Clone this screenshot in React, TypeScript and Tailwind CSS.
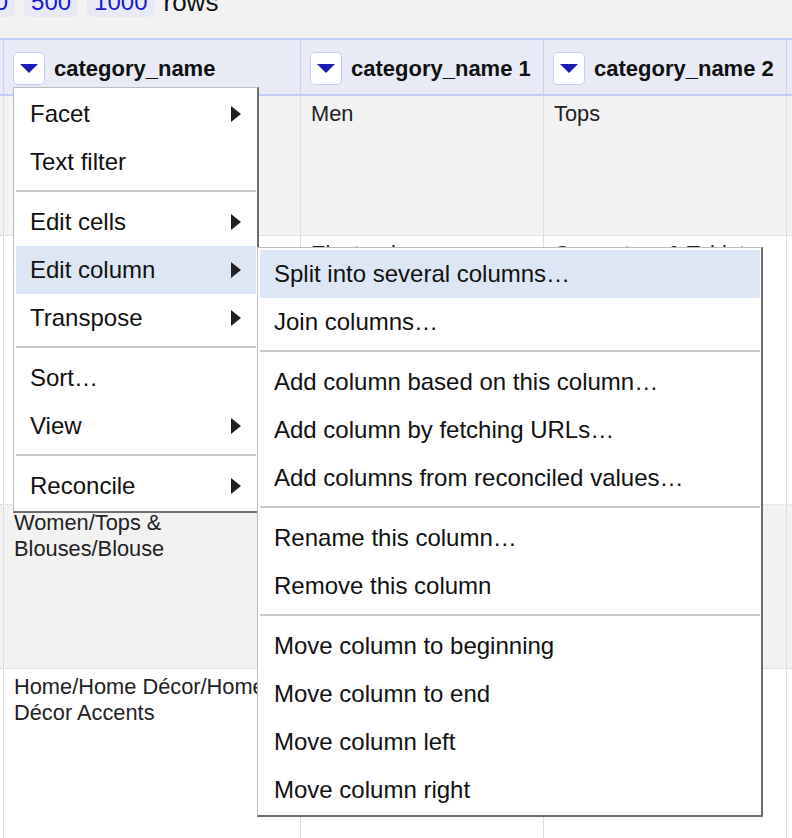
import React from 'react';

type Item = { label: string; sub?: boolean; active?: boolean } | 'sep';

const mainMenu: Item[] = [
  { label: 'Facet', sub: true },
  { label: 'Text filter' },
  'sep',
  { label: 'Edit cells', sub: true },
  { label: 'Edit column', sub: true, active: true },
  { label: 'Transpose', sub: true },
  'sep',
  { label: 'Sort…' },
  { label: 'View', sub: true },
  'sep',
  { label: 'Reconcile', sub: true },
];

const columnMenu: Item[] = [
  { label: 'Split into several columns…', active: true },
  { label: 'Join columns…' },
  'sep',
  { label: 'Add column based on this column…' },
  { label: 'Add column by fetching URLs…' },
  { label: 'Add columns from reconciled values…' },
  'sep',
  { label: 'Rename this column…' },
  { label: 'Remove this column' },
  'sep',
  { label: 'Move column to beginning' },
  { label: 'Move column to end' },
  { label: 'Move column left' },
  { label: 'Move column right' },
];

const rows = [
  { cells: ['Men/Tops/T-shirts', 'Men', 'Tops', ''], h: 'h-[140px]', gray: true },
  { cells: ['Electronics/Games', 'Electronics', 'Computers & Tablets', ''], h: 'h-[269px]', gray: false },
  { cells: ['Women/Tops & Blouses/Blouse', 'Women', 'Tops & Blouses', ''], h: 'h-[164px]', gray: true },
  { cells: ['Home/Home Décor/Home Décor Accents', 'Home', 'Home Décor', ''], h: 'h-[200px]', gray: false },
];

const colWidths = ['w-[297px]', 'w-[243px]', 'w-[243px]', 'w-[243px]'];

const RightArrow = () => (
  <svg width="10" height="16" viewBox="0 0 10 16">
    <polygon points="0,0 10,8 0,16" fill="#222" />
  </svg>
);

const DropButton = () => (
  <div className="w-[32px] h-[33px] shrink-0 bg-white border border-[#c5cdf6] rounded-[5px] flex items-center justify-center">
    <svg width="18" height="9" viewBox="0 0 18 9">
      <polygon points="0,0 18,0 9,9" fill="#1c1cb6" />
    </svg>
  </div>
);

const Menu = ({ items, className }: { items: Item[]; className: string }) => (
  <div
    className={`absolute bg-white border-t border-l border-[#bcbcbc] border-r-2 border-b-2 border-r-[#6d6d6d] border-b-[#6d6d6d] pt-[2px] pl-[2px] pr-[1px] pb-[1px] ${className}`}
  >
    {items.map((it, i) =>
      it === 'sep' ? (
        <div key={i} className="mt-[4px] mb-[6px] h-[2px] bg-[#cccccc]" />
      ) : (
        <div
          key={i}
          className={`h-[48px] flex items-center justify-between pl-[14px] pr-[15px] text-[24px] text-[#111] whitespace-nowrap ${it.active ? 'bg-[#dce6f4]' : ''}`}
        >
          <span>{it.label}</span>
          {it.sub && <RightArrow />}
        </div>
      )
    )}
  </div>
);

export default function App() {
  return (
    <div className="relative w-full h-[838px] overflow-hidden bg-[#f2f2f2] font-['Liberation_Sans',Arial,sans-serif]">
      {/* rows-per-page strip, mostly scrolled off */}
      <div className="h-[38px] overflow-hidden">
        <div className="flex gap-[9px] -mt-[20px] -ml-[39px]">
          {['100', '500', '1000'].map((n) => (
            <div key={n} className="h-[37px] flex items-end pb-[3px] px-[7px] rounded-[6px] bg-[#e7e9f5] text-[24px] leading-[24px] text-[#1a1acc]">
              {n}
            </div>
          ))}
          <div className="h-[37px] flex items-end pb-[3px] text-[26px] leading-[24px] text-[#111]">rows</div>
        </div>
      </div>

      {/* header */}
      <div className="flex h-[58px] bg-[#e8ebf6] border-t-2 border-b-2 border-[#c0c9f7]">
        <div className="w-[3px] shrink-0" />
        {['category_name', 'category_name 1', 'category_name 2', ''].map((name, i) => (
          <div key={i} className={`${colWidths[i]} shrink-0 border-l border-[#c9d0f3] flex items-center gap-[9px] pl-[9px] pt-[2px]`}>
            {name && (
              <>
                <DropButton />
                <span className="font-bold text-[22px] text-[#111] whitespace-nowrap">{name}</span>
              </>
            )}
          </div>
        ))}
      </div>

      {/* data rows */}
      {rows.map((r, ri) => (
        <div key={ri} className={`flex ${r.h} border-b border-dotted border-[#d2d2d2] ${r.gray ? 'bg-[#f2f2f2]' : 'bg-white'}`}>
          <div className="w-[3px] shrink-0" />
          {r.cells.map((c, i) => (
            <div key={i} className={`${colWidths[i]} shrink-0 border-l border-[#dedede] pl-[10px] pr-[8px] pt-[5px] text-[21.8px] leading-[26px] text-[#222]`}>
              {c}
            </div>
          ))}
        </div>
      ))}

      <Menu items={mainMenu} className="left-[13px] top-[87px] w-[246px]" />
      <Menu items={columnMenu} className="left-[257px] top-[247px] w-[506px]" />
    </div>
  );
}
